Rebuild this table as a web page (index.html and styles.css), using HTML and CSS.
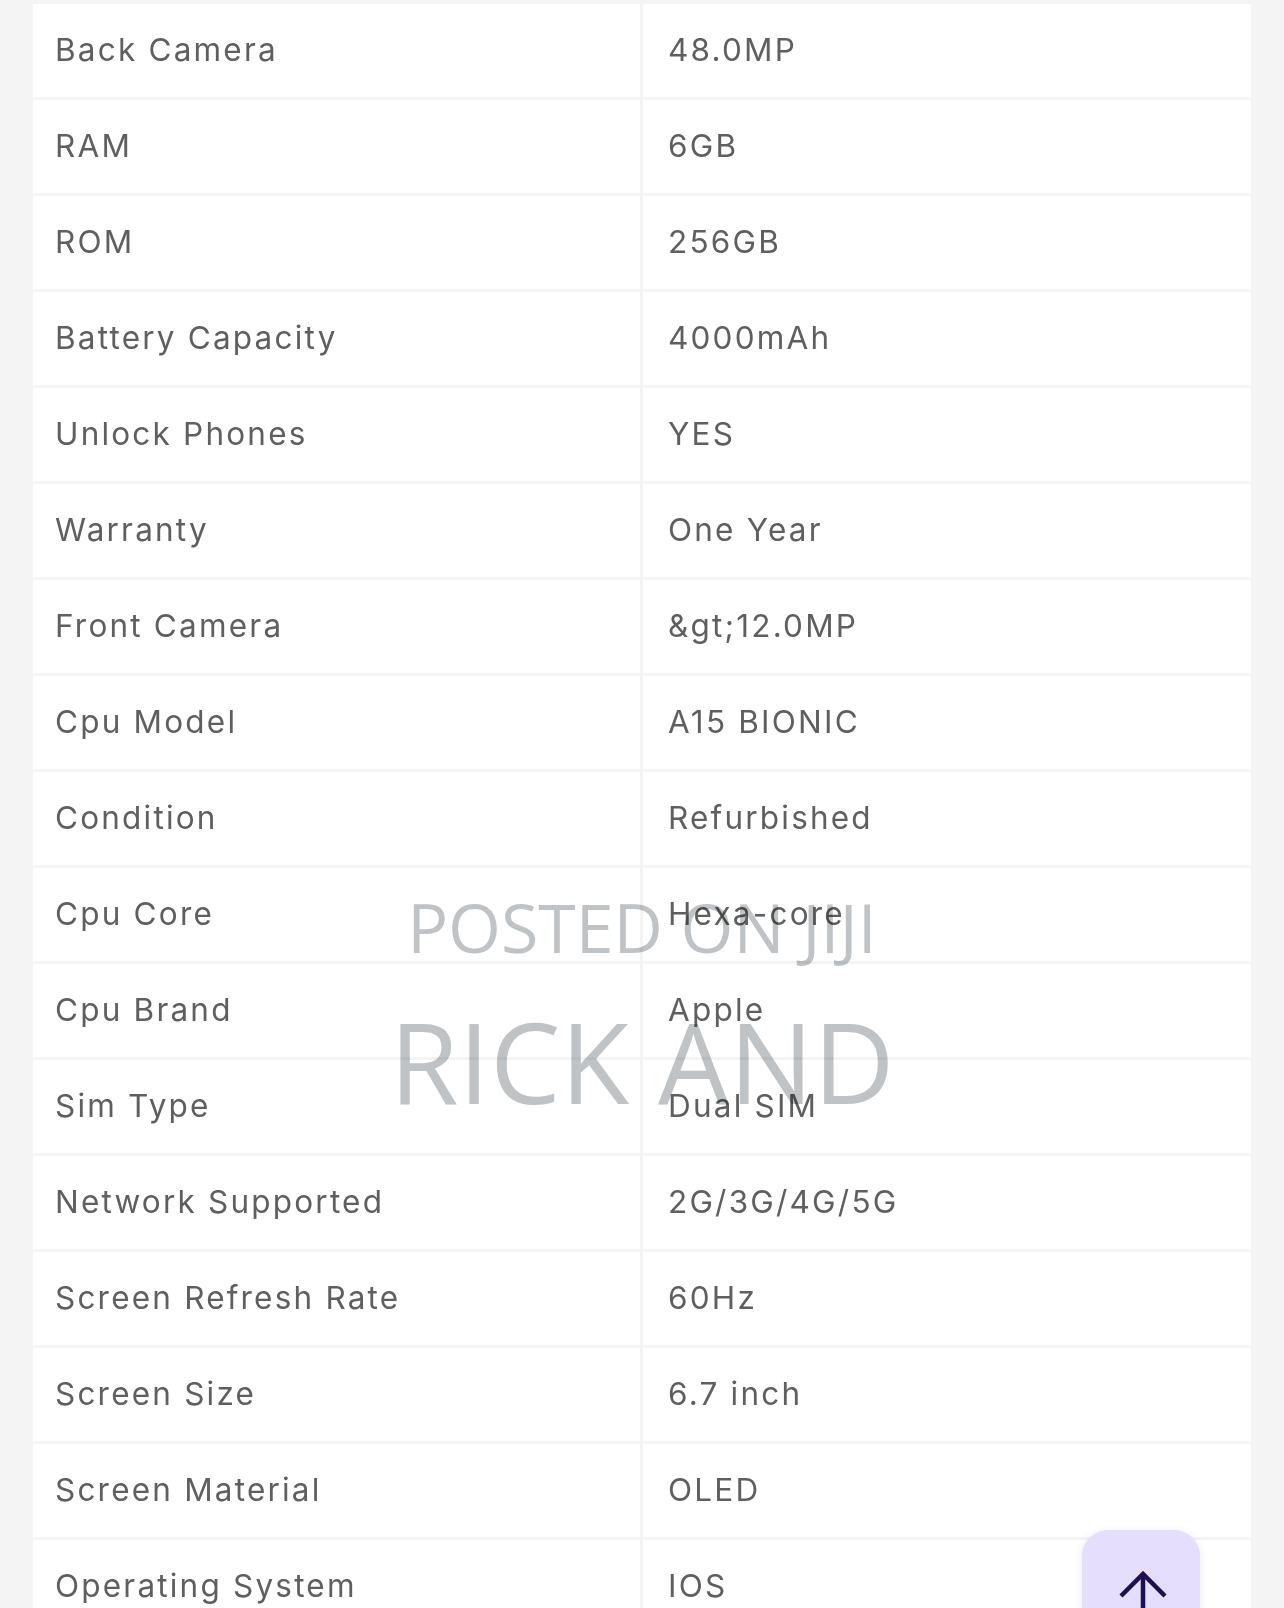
FILE: index.html
```html
<!DOCTYPE html>
<html lang="en">
<head>
<meta charset="utf-8">
<title>Specifications</title>
<link rel="stylesheet" href="styles.css">
</head>
<body>
<div class="page">
  <div class="specs">
    <div class="row"><div class="cell">Back Camera</div><div class="cell">48.0MP</div></div>
    <div class="row"><div class="cell">RAM</div><div class="cell">6GB</div></div>
    <div class="row"><div class="cell">ROM</div><div class="cell">256GB</div></div>
    <div class="row"><div class="cell">Battery Capacity</div><div class="cell">4000mAh</div></div>
    <div class="row"><div class="cell">Unlock Phones</div><div class="cell">YES</div></div>
    <div class="row"><div class="cell">Warranty</div><div class="cell">One Year</div></div>
    <div class="row"><div class="cell">Front Camera</div><div class="cell">&amp;gt;12.0MP</div></div>
    <div class="row"><div class="cell">Cpu Model</div><div class="cell">A15 BIONIC</div></div>
    <div class="row"><div class="cell">Condition</div><div class="cell">Refurbished</div></div>
    <div class="row"><div class="cell">Cpu Core</div><div class="cell">Hexa-core</div></div>
    <div class="row"><div class="cell">Cpu Brand</div><div class="cell">Apple</div></div>
    <div class="row"><div class="cell">Sim Type</div><div class="cell">Dual SIM</div></div>
    <div class="row"><div class="cell">Network Supported</div><div class="cell">2G/3G/4G/5G</div></div>
    <div class="row"><div class="cell">Screen Refresh Rate</div><div class="cell">60Hz</div></div>
    <div class="row"><div class="cell">Screen Size</div><div class="cell">6.7 inch</div></div>
    <div class="row"><div class="cell">Screen Material</div><div class="cell">OLED</div></div>
    <div class="row"><div class="cell">Operating System</div><div class="cell">IOS</div></div>
  </div>

  <div class="watermark wm-top">POSTED ON JIJI</div>
  <div class="watermark wm-bottom">RICK AND</div>

  <button class="to-top" aria-label="Scroll to top">
    <svg width="52" height="52" viewBox="0 0 52 52" fill="none" stroke="#1e0f50" stroke-width="4.5">
      <path d="M28 10 V60"/>
      <path d="M6 32 L28 10 L50 32"/>
    </svg>
  </button>
</div>
</body>
</html>
```

FILE: styles.css
```css
html, body {
  margin: 0;
  padding: 0;
  background: #f4f4f4;
  overflow: hidden;
}

.page {
  position: relative;
  width: 1284px;
  height: 1608px;
  overflow: hidden;
  padding: 4px 33px 0 33px;
  box-sizing: border-box;
  font-family: Inter, Roboto, "Liberation Sans", sans-serif;
}

.specs {
  display: flex;
  flex-direction: column;
  gap: 3px;
  width: 1218px;
}

.row {
  display: grid;
  grid-template-columns: 607px 608px;
  column-gap: 3px;
  height: 93px;
}

.cell {
  background: #ffffff;
  display: flex;
  align-items: center;
  padding-left: 22px;
  padding-bottom: 2px;
  font-size: 31.5px;
  letter-spacing: 2.2px;
  color: #5f5f5f;
}

.cell + .cell {
  padding-left: 25px;
}

.watermark {
  position: absolute;
  left: 0;
  right: 0;
  text-align: center;
  font-family: "Open Sans", "Noto Sans", sans-serif;
  color: #bfc3c5;
  mix-blend-mode: multiply;
  pointer-events: none;
  white-space: nowrap;
  line-height: 1;
}

.wm-top {
  top: 893px;
  font-size: 68px;
}

.wm-bottom {
  top: 1005px;
  font-size: 112px;
}

.to-top {
  position: absolute;
  left: 1082px;
  top: 1530px;
  width: 118px;
  height: 118px;
  border: none;
  border-radius: 26px;
  background: #e5defc;
  box-shadow: 0 2px 8px rgba(80, 60, 140, 0.12);
  display: flex;
  justify-content: center;
  align-items: flex-start;
  padding: 34px 0 0 0;
}

.to-top svg {
  display: block;
}
```
